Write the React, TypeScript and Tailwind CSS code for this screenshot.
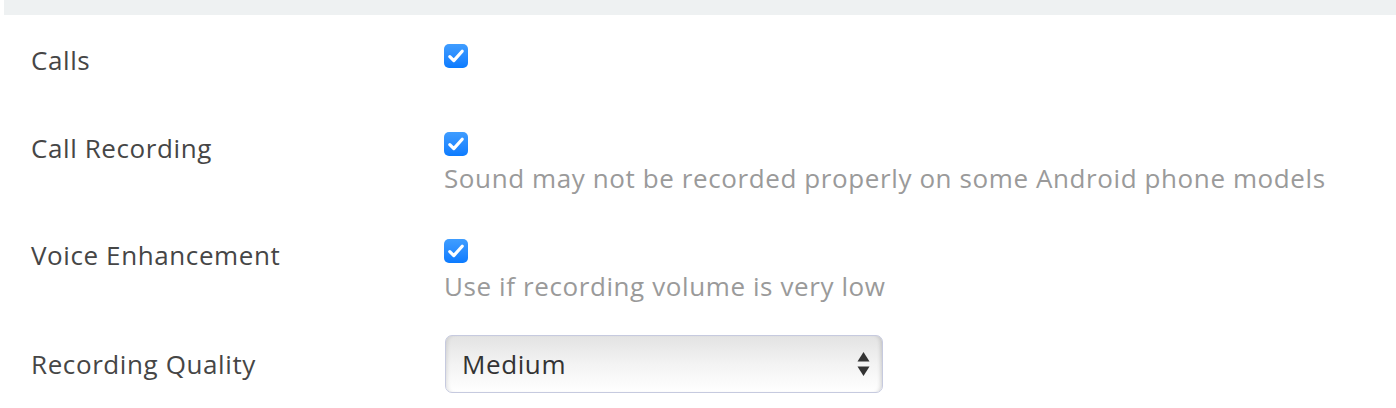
import { ChangeEvent, useState } from "react";

const font = { fontFamily: '"Open Sans", "Liberation Sans", sans-serif' };

function Check({ checked, onToggle }: { checked: boolean; onToggle: () => void }) {
  return (
    <button
      type="button"
      onClick={onToggle}
      className={
        "flex h-6 w-6 items-center justify-center rounded-[5px] " +
        (checked ? "bg-gradient-to-b from-[#3f9dff] to-[#0a7bff]" : "border border-gray-400 bg-white")
      }
    >
      {checked && (
        <svg width="24" height="24" viewBox="0 0 24 24" fill="none">
          <path d="M5.8 12.6 L9.8 16.6 L18.2 7.2" stroke="white" strokeWidth="3.2" strokeLinecap="round" strokeLinejoin="round" />
        </svg>
      )}
    </button>
  );
}

export default function App() {
  const [calls, setCalls] = useState(true);
  const [recording, setRecording] = useState(true);
  const [voice, setVoice] = useState(true);
  const [quality, setQuality] = useState("Medium");

  return (
    <div className="h-[408px] w-[1396px] bg-white text-[26px] tracking-[0.6px]" style={font}>
      <div className="ml-1 h-[15px] bg-[#eef1f2]"></div>

      {/* Calls */}
      <div className="flex pt-[29px]">
        <div className="w-[444px] pl-[31px] leading-[32px] text-[#464646]">Calls</div>
        <div className="pb-[2px]">
          <Check checked={calls} onToggle={() => setCalls(!calls)} />
        </div>
      </div>

      {/* Call Recording */}
      <div className="flex pt-[56px]">
        <div className="w-[444px] pl-[31px] leading-[32px] text-[#464646]">Call Recording</div>
        <div>
          <Check checked={recording} onToggle={() => setRecording(!recording)} />
          <p className="mt-[5px] leading-[34px] text-[#9a9a9a]">Sound may not be recorded properly on some Android phone models</p>
        </div>
      </div>

      {/* Voice Enhancement */}
      <div className="flex pt-[44px]">
        <div className="w-[444px] pl-[31px] leading-[32px] text-[#464646]">Voice Enhancement</div>
        <div>
          <Check checked={voice} onToggle={() => setVoice(!voice)} />
          <p className="mt-[6px] leading-[34px] text-[#9a9a9a]">Use if recording volume is very low</p>
        </div>
      </div>

      {/* Recording Quality */}
      <div className="flex items-center pt-[32px]">
        <div className="w-[444px] pl-[31px] leading-[34px] text-[#464646]">Recording Quality</div>
        <div className="relative ml-px h-[58px] w-[438px] rounded-[7px] border border-[#c6cadf] bg-gradient-to-b from-[#e3e3e3] via-[#f3f3f3] to-white shadow-[inset_4px_0_4px_-3px_rgba(0,0,0,0.12),inset_-4px_0_4px_-3px_rgba(0,0,0,0.18)]">
          <select
            value={quality}
            onChange={(e: ChangeEvent<HTMLSelectElement>) => setQuality(e.target.value)}
            className="h-full w-full appearance-none bg-transparent pl-[16px] pr-10 text-[26px] tracking-[0.6px] text-[#333] outline-none"
            style={font}
          >
            <option>Low</option>
            <option>Medium</option>
            <option>High</option>
          </select>
          <svg className="pointer-events-none absolute right-[12px] top-[15px]" width="13" height="26" viewBox="0 0 13 26">
            <path d="M6.5 1 L12.5 10.5 L0.5 10.5 Z" fill="#333" />
            <path d="M6.5 25 L12.5 15.5 L0.5 15.5 Z" fill="#333" />
          </svg>
        </div>
      </div>
    </div>
  );
}
